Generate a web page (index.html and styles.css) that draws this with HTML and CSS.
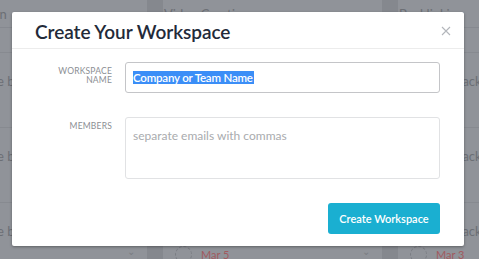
FILE: index.html
```html
<!DOCTYPE html>
<html>
<head>
<meta charset="utf-8">
<link rel="stylesheet" href="styles.css">
</head>
<body>
<div class="page">
<div class="board">
  <div class="column">
    <div class="col-head"><span class="col-title">Blog Creation</span><span class="caret">&#8964;</span></div>
    <div class="col-sub"></div>
    <div class="card"><div class="card-text">Update the blog</div><div class="meta"><span class="avatar"></span><span class="date">Mar 2</span><span class="chev">&#8964;</span></div></div>
    <div class="card"><div class="card-text">Update the blog</div><div class="meta"><span class="avatar"></span><span class="date">Mar 4</span><span class="chev">&#8964;</span></div></div>
    <div class="card"><div class="card-text">Update the blog</div><div class="meta"><span class="avatar"></span><span class="date">Mar 6</span><span class="chev">&#8964;</span></div></div>
  </div>
  <div class="gutter"></div>
  <div class="column">
    <div class="col-head"><span class="col-title">Video Creation</span><span class="caret">&#8964;</span></div>
    <div class="col-sub"></div>
    <div class="card"><div class="card-text">Record intro video</div><div class="meta"><span class="avatar"></span><span class="date">Mar 1</span><span class="chev">&#8964;</span></div></div>
    <div class="card"><div class="card-text">Edit product demo</div><div class="meta"><span class="avatar"></span><span class="date">Mar 3</span><span class="chev">&#8964;</span></div></div>
    <div class="card"><div class="card-text">Upload tutorial</div><div class="meta"><span class="avatar"></span><span class="date">Mar 5</span><span class="chev">&#8964;</span></div></div>
  </div>
  <div class="gutter"></div>
  <div class="column">
    <div class="col-head"><span class="col-title">Backlinking</span><span class="caret">&#8964;</span></div>
    <div class="col-sub"></div>
    <div class="card"><div class="card-text">Update backlinks</div><div class="meta"><span class="avatar"></span><span class="date">Mar 1</span><span class="chev">&#8964;</span></div></div>
    <div class="card"><div class="card-text">Update backlinks</div><div class="meta"><span class="avatar"></span><span class="date">Mar 2</span><span class="chev">&#8964;</span></div></div>
    <div class="card"><div class="card-text">Update backlinks</div><div class="meta"><span class="avatar"></span><span class="date">Mar 3</span><span class="chev">&#8964;</span></div></div>
  </div>
</div>
</div>

<div class="modal">
  <div class="modal-head">
    <h1 class="modal-title">Create Your Workspace</h1>
    <span class="close">
      <svg width="10" height="10" viewBox="0 0 10 10"><path d="M1 1 L9 9 M9 1 L1 9" stroke="#b3b6bb" stroke-width="1.1" fill="none"/></svg>
    </span>
  </div>
  <div class="modal-body">
    <div class="form-row">
      <div class="label">WORKSPACE<br>NAME</div>
      <div class="field input"><span class="selected">Company or Team Name</span></div>
    </div>
    <div class="form-row">
      <div class="label">MEMBERS</div>
      <div class="field textarea"><span class="placeholder">separate emails with commas</span></div>
    </div>
    <div class="actions">
      <button class="btn">Create Workspace</button>
    </div>
  </div>
</div>
</body>
</html>
```

FILE: styles.css
```css
html, body {
  margin: 0;
  padding: 0;
  background: #8f9298;
  font-family: Lato, "Liberation Sans", sans-serif;
}

.page {
  width: 479px;
  height: 259px;
  overflow: hidden;
}

.board {
  display: flex;
  margin-left: -72px;
  height: 259px;
}

.column {
  width: 219px;
  flex: none;
  background: #909399;
}

.gutter {
  width: 16px;
  flex: none;
  background: #85888e;
}

.col-head {
  height: 27px;
  display: flex;
  align-items: center;
  border-bottom: 1px solid #868990;
  color: #6c6f75;
  font-size: 13px;
  padding-left: 1px;
}

.caret {
  margin-left: 20px;
  font-size: 11px;
  color: #707379;
  transform: translateY(-3px);
}

.col-sub {
  height: 24px;
  border-bottom: 1px solid #878a90;
}

.card {
  height: 74px;
  border-bottom: 1px solid #878a90;
  padding: 0 12px;
}

.card-text {
  padding-top: 20px;
  height: 16px;
  line-height: 16px;
  font-size: 13px;
  color: #6c6f75;
  white-space: nowrap;
}

.meta {
  margin-top: 6px;
  height: 18px;
  display: flex;
  align-items: center;
}

.avatar {
  width: 15px;
  height: 15px;
  border: 1px dashed #7a7d83;
  border-radius: 50%;
}

.date {
  margin-left: 9px;
  font-size: 11px;
  color: #a25a5f;
}

.chev {
  margin-left: auto;
  font-size: 10px;
  color: #7a7d83;
  transform: translateY(-3px);
}

/* Modal */
.modal {
  position: absolute;
  left: 12px;
  top: 12px;
  width: 452px;
  height: 234px;
  background: #ffffff;
  border-radius: 2px;
  box-shadow: 0 1px 3px rgba(0, 0, 0, 0.35);
  display: flex;
  flex-direction: column;
}

.modal-head {
  height: 36px;
  border-bottom: 1px solid #ececec;
  display: flex;
  align-items: center;
  padding: 0 13px 0 23px;
}

.modal-title {
  margin: 0;
  font-size: 19px;
  font-weight: 600;
  color: #232a39;
  letter-spacing: -0.05px;
  flex: 1;
  transform: translateY(1px);
}

.close {
  display: flex;
  width: 10px;
  height: 10px;
  transform: translateY(1px);
}

.modal-body {
  flex: 1;
  padding: 13px 24px 12px 23px;
  display: flex;
  flex-direction: column;
  gap: 24px;
}

.form-row {
  display: flex;
  align-items: flex-start;
  gap: 13px;
}

.label {
  width: 77px;
  flex: none;
  text-align: right;
  font-size: 8.5px;
  line-height: 9.5px;
  padding-top: 4.5px;
  color: #8b8e93;
  letter-spacing: 0.2px;
}

.field {
  flex: 1;
  box-sizing: border-box;
  border-radius: 3px;
  padding-left: 7px;
}

.input {
  height: 31px;
  border: 1px solid #c4c5c8;
  display: flex;
  align-items: center;
}

.selected {
  background: #3b8ef7;
  color: #ffffff;
  font-size: 11.5px;
  font-weight: 600;
  letter-spacing: -0.2px;
  line-height: 13px;
  padding: 0 1px 0 0;
}

.textarea {
  height: 62px;
  border: 1px solid #e1e2e4;
  padding-top: 6px;
}

.placeholder {
  font-size: 12px;
  line-height: 16px;
  color: #a9abae;
}

.actions {
  margin-top: auto;
  display: flex;
  justify-content: flex-end;
}

.btn {
  width: 112px;
  height: 31px;
  border: none;
  border-radius: 3px;
  background: #1aafd1;
  color: #ffffff;
  font-family: Lato, "Liberation Sans", sans-serif;
  font-size: 11px;
  font-weight: 600;
  padding: 0;
}
```
